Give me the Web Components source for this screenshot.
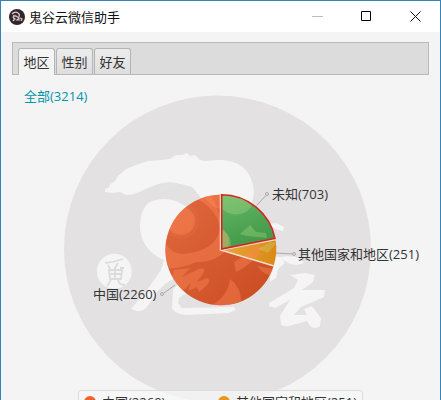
<!DOCTYPE html>
<html lang="zh-CN">
<head>
<meta charset="utf-8">
<title>鬼谷云微信助手</title>
<style>
  html {
    overflow: hidden;
  }
  body {
    margin: 0;
    font: 13px/18px "Open Sans", "Noto Sans CJK SC", sans-serif;
    color: #333;
  }
</style>
</head>
<body>
<app-window caption="鬼谷云微信助手">
  <tabs-bar tabs='["地区","性别","好友"]'></tabs-bar>
  <chart-pane>
    <a slot="link" href="#all">全部(3214)</a>
    <region-pie></region-pie>
    <chart-legend slot="legend">
      <legend-item style="--dot: #f3622d">中国(2260)</legend-item>
      <legend-item style="--dot: #e69a1c">其他国家和地区(251)</legend-item>
      <legend-item style="--dot: #57b757">未知(703)</legend-item>
    </chart-legend>
  </chart-pane>
</app-window>

<script>
function define(name, html, setup) {
  const template = document.createElement("template");
  template.innerHTML = html;
  customElements.define(
    name,
    class extends HTMLElement {
      constructor() {
        super();
        this.attachShadow({ mode: "open" });
        this.shadowRoot.appendChild(template.content.cloneNode(true));
        if (setup) setup(this);
      }
    }
  );
}

define("app-window", `
<style>
  :host {
    display: block;
    min-height: 100vh;
    box-sizing: border-box;
    border: 1px solid #3584b5;
    border-bottom: 0;
    background: #f4f4f4;
  }
  header {
    display: flex;
    align-items: center;
    height: 31px;
    padding-left: 8px;
    background: #fff;
    color: #111;
  }
  .logo {
    width: 16px;
    height: 16px;
    margin-right: 4px;
  }
  h1 {
    flex: 1;
    margin: 0;
    font: inherit;
  }
  button {
    width: 49px;
    height: 31px;
    padding: 0;
    border: 0;
    background: none;
  }
  button svg {
    display: block;
    margin: auto;
  }
  main {
    padding: 10px 11px;
  }
</style>
<header>
  <svg class="logo" viewBox="0 0 16 16">
    <circle cx="8" cy="8" r="8" fill="#352528"/>
    <path d="M3 5q3-3 6-1q2 1 1 4M5 6q-2 3 1 4l-2 2M7 7l3 2-2 2h3M11 9l2 1-1 2" fill="none" stroke="#d8cfd0" stroke-width="1.2"/>
    <circle cx="6" cy="7" r="1.3" fill="#aaa0a2"/>
  </svg>
  <h1></h1>
  <button aria-label="最小化"><svg width="11" height="11"><path d="M0 5.5h11" stroke="#b4bfca"/></svg></button>
  <button aria-label="最大化"><svg width="11" height="11"><path d="M.5.5h9v9h-9z" fill="none" stroke="#000"/></svg></button>
  <button aria-label="关闭"><svg width="11" height="11"><path d="M.5.5l10 10M10.500.5l-10 10" stroke="#111"/></svg></button>
</header>
<main><slot></slot></main>
`, (el) => {
  el.shadowRoot.querySelector("h1").textContent = el.getAttribute("caption");
});

define("tabs-bar", `
<style>
  :host {
    display: flex;
    align-items: flex-end;
    gap: 1px;
    height: 33px;
    box-sizing: border-box;
    padding-left: 5px;
    border: 1px solid #b9b9b9;
    background: #dcdcdc;
  }
  button {
    width: 37px;
    height: 26px;
    padding: 0;
    border: 1px solid #b5b5b5;
    border-bottom: 0;
    border-radius: 3px 3px 0 0;
    background: linear-gradient(#ececec, #dedede);
    font: inherit;
    color: #333;
    cursor: pointer;
  }
  button.active {
    height: 27px;
    margin-bottom: -1px;
    background: #f4f4f4;
  }
</style>
`, (el) => {
  el.setAttribute("role", "tablist");
  JSON.parse(el.getAttribute("tabs")).forEach((label, i) => {
    const tab = document.createElement("button");
    tab.textContent = label;
    tab.setAttribute("role", "tab");
    if (i === 0) tab.classList.add("active");
    tab.addEventListener("click", () => {
      el.shadowRoot
        .querySelectorAll("button")
        .forEach((other) => other.classList.toggle("active", other === tab));
    });
    el.shadowRoot.appendChild(tab);
  });
});

define("chart-pane", `
<style>
  :host {
    display: flex;
    flex-direction: column;
  }
  .chart {
    display: grid;
  }
  .chart > * {
    grid-area: 1 / 1;
  }
  .link {
    z-index: 1;
    justify-self: start;
    align-self: start;
    padding: 12px;
  }
  ::slotted(a) {
    color: #0096a8;
    text-decoration: none;
  }
  ::slotted(chart-legend) {
    z-index: 1;
    align-self: center;
  }
</style>
<div class="chart">
  <div class="link"><slot name="link"></slot></div>
  <slot></slot>
</div>
<slot name="legend"></slot>
`);

define("region-pie", `
<style>
  :host {
    display: block;
    grid-area: 1 / 1;
  }
  svg {
    display: block;
    width: 100%;
    overflow: visible;
  }
  text {
    fill: #333;
  }
  .leader {
    fill: none;
    stroke: #aaa;
  }
</style>
<svg viewBox="12 75 417 315">
  <defs>
    <linearGradient id="orange" x1="0" y1="0" x2="1" y2="1"><stop offset="0" stop-color="#e0683f"/><stop offset=".5" stop-color="#d65a30"/><stop offset="1" stop-color="#c84b20"/></linearGradient>
    <linearGradient id="green" x1="0" y1="0" x2=".3" y2="1"><stop offset="0" stop-color="#64b765"/><stop offset="1" stop-color="#43994a"/></linearGradient>
    <linearGradient id="amber" x1="0" y1="0" x2="1" y2="0"><stop offset="0" stop-color="#e8a63a"/><stop offset="1" stop-color="#d98a14"/></linearGradient>
    <clipPath id="disc"><circle cx="220.700" cy="250" r="55.300"/></clipPath>
  </defs>

  <circle cx="217.500" cy="249" r="153.500" fill="#e3e1e2"/>

  <!-- brush painting -->
  <g fill="#f5f5f5">
    <path d="M105 189l5-2-1-2 6-4 3-5 8-7 10-4 12-4 14-1 8-1 6-4 6 0 5-2 3 3 5-1 5 5 5 1 14-1c20 0 30 10 33 22 3 8 2 15-1 23-4 8-14 12-25 9-12-3-22-11-28-20l-6-7-9-2q-13-6-30 1c-10 4-18 9-27 9l-6-3-8 1-7-1z"/>
    <path d="M148 203q14-7 28-2l15 8q30 15 30 35c0 12-12 20-31 22l-15 12-10 6-8 8-8 12q-4 8-12 7l-6-2 16-19 14-20 3-10c-16-6-24-21-24-34q0-15 8-23z"/>
    <path d="M173 289l6-5 6-12 24-4-4 14-20 12-6 4-1 5 4 5 52-1 2 3-8 3-42 2q-11-1-14-7z"/>
    <path d="M270 224l6-1 8 4-1 4-8-2zM272 256l9 1 4 6-7 6-2 9-6 4zM280 257q12-2 19 1l5 5-8 2q-9-1-16-8z"/>
    <path d="M290 275l15-2 10 2-2 7-11 8 23 0-1 7-23 10-7 8 13 0-3-6 8-3 9 12-1 8q-5 4-10 0l-3-5-18 5q-7 1-8-2l-1-8 10-16-15 8-6-2 0-3 25-15 4-8z"/>
    <circle cx="114.300" cy="271.300" r="17.500"/>
  </g>
  <path d="M160 193q17-14 32-4l-6-4q-14-4-26 2z" fill="#e3e4e2"/>
  <path d="M105 263q10-1 18-4M108 265l2 4M118 263l-3 5M109 270h13l-1 9h-11zM115 267v12M110 274h11M111 280l-4 6M118 280q1 5 7 5M120 268l4 0" fill="none" stroke="#dddcdc" stroke-width="1.800"/>

  <!-- pie -->
  <path d="M220.700 250V194.700A55.300 55.300 0 1 0 273.600 266Z" fill="url(#orange)"/>
  <path d="M221.500 250L275.500 239.500A55.300 55.300 0 0 1 273.600 266Z" fill="url(#amber)"/>
  <path d="M221.700 249V195A54.500 54.500 0 0 1 275 238.500Z" fill="url(#green)"/>
  <g clip-path="url(#disc)">
    <g fill="#ff8a58" fill-opacity=".4">
      <path fill-rule="evenodd" d="M160 190H206Q222 208 220 226 232 236 228 248 218 262 196 262 180 270 160 268ZM160 225Q163 252 182 254 214 252 220 230 220 212 196 198 170 196 160 225Z"/>
      <circle cx="181" cy="221" r="18" fill-opacity=".1"/>
      <circle cx="181" cy="221" r="14"/>
      <path d="M203 195Q210 207 220 209V194ZM174 270l16-2-8 9 17-8q8-2 4 5l-6 8 10-4q5 2-1 8l-7 6-2-5-9 4 3-8-13 13-12 4zM172 288l8-3-3 9-8 2zM210 306q18-9 20-27 13 9 11 29zM234 262q15-8 22-20l7 6q-10 16-27 24zM257 266l17 3-2 7q-9-2-15-10z"/>
    </g>
    <path d="M222 194h30q4 16-12 20-10 2-18-5zM222 230q9 4 9 16l-9 2zM240 234l10-9 6 7 10 1 1 5-20-2zM258 249l12-7 7 1-9 10z" fill="#c5ed91" fill-opacity=".26"/>
  </g>
  <path d="M220.500 195V250L274 266M221 250L276 239.500" fill="none" stroke="#f3ddd0" stroke-width="1.500"/>
  <path d="M221.700 249V194.700A54.500 54.500 0 0 1 275 238.500Z" fill="none" stroke="#d8221f" stroke-width="1.500"/>

  <path class="leader" d="M257 205L266 195.500M276 253L292 254M175 285L164 293"/>
  <g class="leader"><circle cx="267" cy="194" r="1.500"/><circle cx="294" cy="254" r="1.500"/><circle cx="162" cy="294" r="1.500"/></g>
  <text x="272" y="199">未知(703)</text>
  <text x="298" y="259">其他国家和地区(251)</text>
  <text x="93" y="299">中国(2260)</text>
</svg>
`);

define("chart-legend", `
<style>
  :host {
    display: grid;
    grid-template-columns: 1fr 1fr;
    column-gap: 10px;
    width: 285px;
    box-sizing: border-box;
    padding: 2px 5px;
    border: 1px solid #dcdcdc;
    border-radius: 3px;
    background: rgba(248, 248, 248, .7);
  }
</style>
<slot></slot>
`);

define("legend-item", `
<style>
  :host {
    display: flex;
    align-items: center;
    gap: 6px;
    white-space: nowrap;
  }
  i {
    width: 12px;
    height: 12px;
    border-radius: 50%;
    background: var(--dot);
  }
</style>
<i></i><span><slot></slot></span>
`);
</script>
</body>
</html>
